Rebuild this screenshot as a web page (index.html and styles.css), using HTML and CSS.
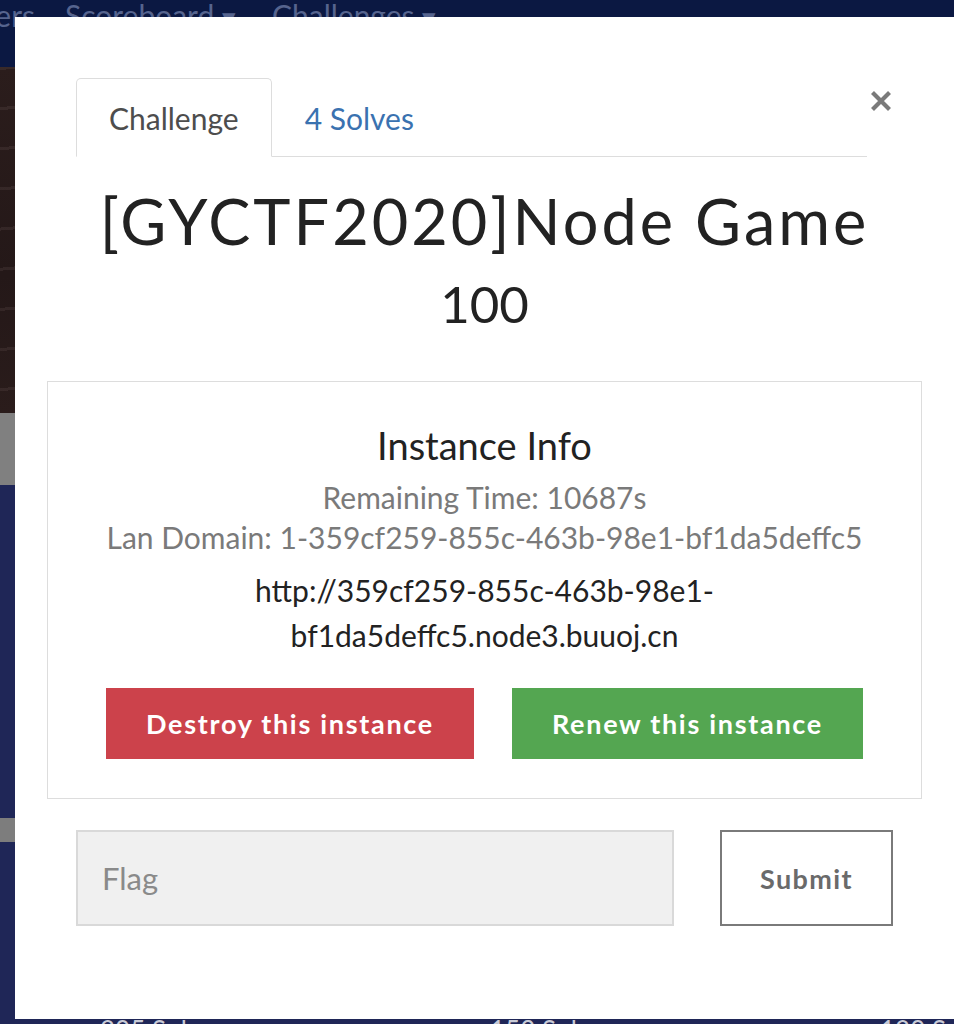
FILE: index.html
```html
<!DOCTYPE html>
<html lang="en">
<head>
<meta charset="utf-8">
<title>[GYCTF2020]Node Game</title>
<link rel="stylesheet" href="styles.css">
</head>
<body>
<div class="page">
  <nav class="navbar">
    <div class="nav-track">
      <span class="nav-item">Users</span>
      <span class="nav-item">Scoreboard <span class="caret">▾</span></span>
      <span class="nav-item">Challenges <span class="caret">▾</span></span>
    </div>
  </nav>
  <div class="hero"></div>
  <div class="strip-gray"></div>
  <div class="navy-block"></div>
  <div class="strip-gray thin"></div>
  <div class="navy-block tall">
    <div class="solves-row">
      <span>205 Solves</span><span>153 Solves</span><span>120 Solves</span>
    </div>
  </div>
</div>

<div class="modal">
  <div class="modal-inner">
    <div class="tab-row">
      <ul class="tabs">
        <li class="tab active">Challenge</li>
        <li class="tab link">4 Solves</li>
      </ul>
      <button class="close" aria-label="Close">
        <svg width="22" height="22" viewBox="0 0 22 22"><path d="M2.5 2.5 L19.5 19.5 M19.5 2.5 L2.5 19.5" stroke="#7a7a7a" stroke-width="4.2" stroke-linecap="butt"/></svg>
      </button>
    </div>

    <h2 class="title">[GYCTF2020]Node Game</h2>
    <h3 class="value">100</h3>

    <div class="instance">
      <h4 class="instance-title">Instance Info</h4>
      <p class="muted">Remaining Time: 10687s</p>
      <p class="muted">Lan Domain: 1-359cf259-855c-463b-98e1-bf1da5deffc5</p>
      <p class="url">http://359cf259-855c-463b-98e1-bf1da5deffc5.node3.buuoj.cn</p>
      <div class="actions">
        <button class="btn btn-red">Destroy this instance</button>
        <button class="btn btn-green">Renew this instance</button>
      </div>
    </div>

    <div class="flag-row">
      <input class="flag" type="text" placeholder="Flag">
      <button class="submit">Submit</button>
    </div>
  </div>
</div>
</body>
</html>
```

FILE: styles.css
```css
* { box-sizing: border-box; }
html, body { margin: 0; padding: 0; }
body {
  width: 954px;
  height: 1024px;
  overflow: hidden;
  font-family: "Lato", "Liberation Sans", sans-serif;
  background: #1f2657;
  position: relative;
}

.page {
  display: flex;
  flex-direction: column;
  height: 1024px;
  overflow: hidden;
}

.navbar {
  height: 67px;
  background: #0b1842;
  overflow: hidden;
  flex: none;
}
.nav-track {
  display: flex;
  gap: 30px;
  margin-left: -39px;
  font-family: "Lato", sans-serif;
  font-size: 30px;
  color: #56648e;
  line-height: 30px;
}
.nav-item { white-space: nowrap; }
.nav-item:last-child { margin-left: 6px; }
.caret { font-size: 27px; }

.hero {
  height: 346px;
  flex: none;
  background:
    repeating-linear-gradient(175deg, rgba(120,100,100,0.18) 0 3px, transparent 3px 40px),
    linear-gradient(180deg, #2b1d1c, #241818 60%, #2a1c1b);
}
.strip-gray { height: 72px; background: #808080; flex: none; }
.strip-gray.thin { height: 24px; background: #7d7d7d; }
.navy-block { height: 333px; background: #1f2657; flex: none; }
.navy-block.tall { height: 182px; overflow: hidden; }
.solves-row {
  display: flex;
  padding-left: 100px;
  padding-top: 173px;
  font-size: 26px;
  color: #c9cbd6;
  line-height: 30px;
}
.solves-row span { width: 390px; flex: none; white-space: nowrap; }

/* modal */
.modal {
  position: absolute;
  left: 15px;
  top: 17px;
  width: 939px;
  height: 1002px;
  background: #ffffff;
}
.modal-inner {
  padding: 61px 32px 0 32px;
}

.tab-row {
  display: flex;
  align-items: flex-start;
  margin: 0 27px 0 29px;
}
.tabs {
  list-style: none;
  margin: 0;
  padding: 0;
  display: flex;
  width: 791px;
  border-bottom: 1px solid #dddddd;
}
.tab {
  font-size: 30px;
  line-height: 38px;
  padding: 20px 32px 19px 32px;
  margin-bottom: -1px;
  border: 1px solid transparent;
  border-radius: 5px 5px 0 0;
}
.tab.active {
  color: #4d4d4d;
  border-color: #dddddd;
  border-bottom-color: #ffffff;
  background: #fff;
}
.tab.link { color: #3a72b0; }
.close {
  border: 0;
  background: none;
  padding: 0;
  margin: 12px 0 0 3px;
  width: 22px;
  height: 22px;
  cursor: pointer;
}

.title {
  margin: 29px 0 0 0;
  text-align: center;
  font-family: "Lato", sans-serif;
  font-weight: 400;
  font-size: 63px;
  letter-spacing: 3px;
  line-height: 70px;
  color: #222222;
}
.value {
  margin: 18px 0 0 0;
  text-align: center;
  font-weight: 400;
  font-size: 51px;
  line-height: 60px;
  color: #222222;
}

.instance {
  margin-top: 47px;
  border: 1px solid #dddddd;
  padding: 40px 30px 39px;
  text-align: center;
}
.instance-title {
  margin: 0 0 9px;
  font-weight: 400;
  font-size: 38px;
  line-height: 46px;
  color: #222222;
}
.muted {
  margin: 0;
  font-size: 30px;
  line-height: 40px;
  color: #7a7a7a;
}
.url {
  margin: 11px 0 0;
  font-size: 30px;
  line-height: 45px;
  color: #222222;
}
.actions {
  margin-top: 30px;
  display: flex;
  justify-content: center;
  gap: 38px;
}
.btn {
  border: 0;
  height: 71px;
  padding: 0 40px;
  font-family: "Lato", sans-serif;
  font-weight: 700;
  font-size: 27px;
  letter-spacing: 1.7px;
  color: #ffffff;
}
.btn-red { background: #cc424b; }
.btn-green { background: #54a651; }

.flag-row {
  display: flex;
  align-items: flex-start;
  margin: 31px 27px 0 29px;
  gap: 46px;
}
.flag {
  width: 598px;
  height: 96px;
  background: #f0f0f0;
  border: 2px solid #d9d9d9;
  padding: 0 24px;
  font-family: "Lato", sans-serif;
  font-size: 31px;
  color: #444;
  outline: none;
}
.flag::placeholder { color: #8a8a8a; }
.submit {
  width: 173px;
  height: 96px;
  background: #ffffff;
  border: 2px solid #7a7a7a;
  font-family: "Lato", sans-serif;
  font-weight: 700;
  font-size: 27px;
  letter-spacing: 1.4px;
  color: #6a6a6a;
}
```
